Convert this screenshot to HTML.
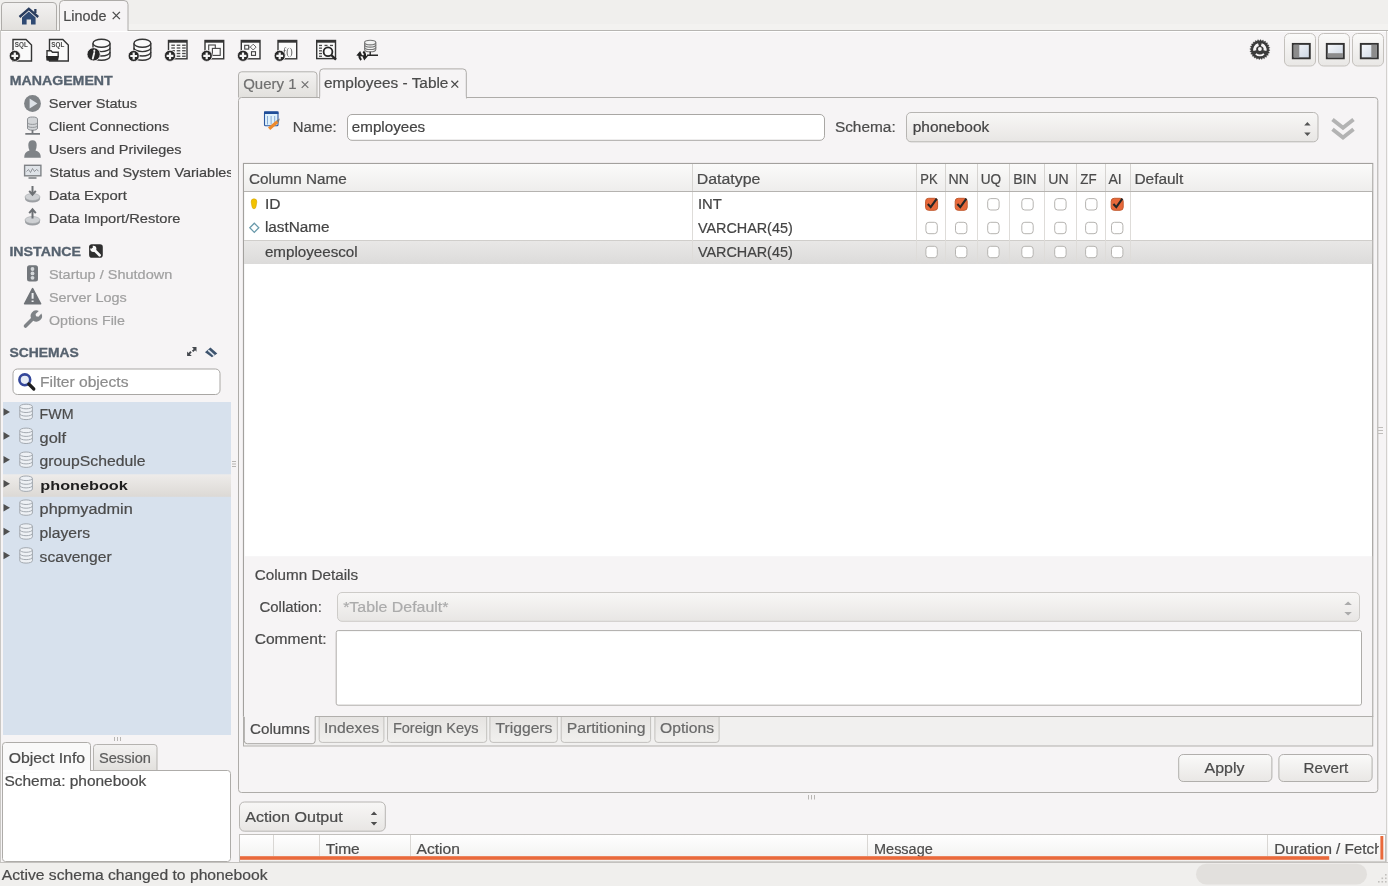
<!DOCTYPE html>
<html><head><meta charset="utf-8"><style>
html,body{margin:0;padding:0;background:#f6f4f5;overflow:hidden;}
svg{display:block;font-family:"Liberation Sans",sans-serif;-webkit-font-smoothing:antialiased;will-change:transform;}
</style></head><body>
<svg width="1388" height="886" viewBox="0 0 1388 886">
<defs>
<linearGradient id="gTab" x1="0" y1="0" x2="0" y2="1"><stop offset="0" stop-color="#f3f2f1"/><stop offset="1" stop-color="#e2e0dd"/></linearGradient>
<linearGradient id="gHdr" x1="0" y1="0" x2="0" y2="1"><stop offset="0" stop-color="#fbfbfa"/><stop offset="1" stop-color="#eeedec"/></linearGradient>
<linearGradient id="gBtn" x1="0" y1="0" x2="0" y2="1"><stop offset="0" stop-color="#fafaf9"/><stop offset="1" stop-color="#e9e7e5"/></linearGradient>
<linearGradient id="gCombo" x1="0" y1="0" x2="0" y2="1"><stop offset="0" stop-color="#f8f7f6"/><stop offset="1" stop-color="#e8e6e4"/></linearGradient>
<linearGradient id="gSel" x1="0" y1="0" x2="0" y2="1"><stop offset="0" stop-color="#eeecea"/><stop offset="1" stop-color="#dcd9d5"/></linearGradient>
<linearGradient id="gRow" x1="0" y1="0" x2="0" y2="1"><stop offset="0" stop-color="#e9e8e7"/><stop offset="1" stop-color="#dcdbda"/></linearGradient>
<linearGradient id="gTab2" x1="0" y1="0" x2="0" y2="1"><stop offset="0" stop-color="#e6e4e2"/><stop offset="1" stop-color="#f1f0ee"/></linearGradient>
<linearGradient id="gHdr2" x1="0" y1="0" x2="0" y2="1"><stop offset="0" stop-color="#ffffff"/><stop offset="1" stop-color="#f1f0ef"/></linearGradient>
</defs>
<rect x="0" y="0" width="1388" height="886" fill="#f6f4f5" />
<rect x="0" y="0" width="1388" height="30" fill="#f0efed" />
<rect x="0" y="862" width="1388" height="24" fill="#f0efed" />
<line x1="0" y1="30.5" x2="1388" y2="30.5" stroke="#b7b5b2" stroke-width="1"/>
<line x1="0" y1="31.5" x2="1388" y2="31.5" stroke="#ffffff" stroke-width="1"/>
<rect x="0" y="24" width="1388" height="6" fill="#f3f2f0" />
<line x1="1386.5" y1="31" x2="1386.5" y2="862" stroke="#d3d1ce" stroke-width="1"/>
<line x1="0" y1="862.5" x2="1388" y2="862.5" stroke="#c4c2bf" stroke-width="1"/>
<path d="M1.5,30 V6 Q1.5,2.5 5,2.5 H53 Q56.5,2.5 56.5,6 V30" fill="url(#gTab)" stroke="#aeaca9"/>
<path d="M59.5,31 V4.5 Q59.5,0.5 63.5,0.5 H124 Q128,0.5 128,4.5 V31" fill="#f6f4f5" stroke="#aeaca9"/>
<text x="63.30" y="20.5" font-size="14" fill="#4a4a4a" stroke="#4a4a4a" stroke-width="0.2" textLength="43.20" lengthAdjust="spacingAndGlyphs" >Linode</text>
<path d="M112.7,11.9 L119.89999999999999,19.1 M112.7,19.1 L119.89999999999999,11.9" stroke="#4a4a4a" stroke-width="1.3"/>
<path d="M19.5,17 L28.8,8.8 L38.2,17" fill="none" stroke="#2a3d5e" stroke-width="2.4" stroke-linejoin="miter"/>
<rect x="34.2" y="9" width="2.3" height="4" fill="#2a3d5e"/>
<path d="M22,17.5 L28.8,11.6 L35.6,17.5 V24.5 H31 V19.5 H26.6 V24.5 H22 Z" fill="#2f4a73"/>
<path d="M13,39.5 H26.0 L31.5,45.0 V61 H13 Z" fill="#fafafa" stroke="#353535" stroke-width="1.4"/>
<text x="14.8" y="47.2" font-size="8" font-weight="bold" fill="#444" textLength="13" lengthAdjust="spacingAndGlyphs">SQL</text>
<circle cx="14.8" cy="55.9" r="5.6" fill="#262626" stroke="#f6f4f5" stroke-width="0.8"/>
<path d="M11.4,55.9 H18.2 M14.8,52.5 V59.3" stroke="#f4f4f4" stroke-width="2.2"/>
<path d="M49.5,39.5 H62.8 L68.3,45.0 V61 H49.5 Z" fill="#fafafa" stroke="#353535" stroke-width="1.4"/>
<text x="51.3" y="47.2" font-size="8" font-weight="bold" fill="#444" textLength="13" lengthAdjust="spacingAndGlyphs">SQL</text>
<path d="M47,60.5 V50.7 H51 L52.5,52.3 H58.2 V56" fill="#fafafa" stroke="#353535" stroke-width="1.4"/>
<path d="M46,56 H59 L58,60.8 H47.5 Z" fill="#262626"/>
<path d="M93,43.3 V56.3 A8.5,4 0 0 0 110,56.3 V43.3" fill="#fafafa" stroke="#353535" stroke-width="1.4"/>
<ellipse cx="101.5" cy="43.3" rx="8.5" ry="4" fill="#fafafa" stroke="#353535" stroke-width="1.4"/>
<path d="M93,47.63333333333333 A8.5,4 0 0 0 110,47.63333333333333" fill="none" stroke="#353535" stroke-width="1.4"/>
<path d="M93,51.96666666666666 A8.5,4 0 0 0 110,51.96666666666666" fill="none" stroke="#353535" stroke-width="1.4"/>
<circle cx="93.6" cy="54.3" r="6.6" fill="#262626" stroke="#f6f4f5" stroke-width="0.8"/>
<path d="M94.3,50.6 v0.3" stroke="#eee" stroke-width="2" stroke-linecap="round"/>
<path d="M94.2,53 L92.8,58.5" stroke="#eee" stroke-width="1.9" stroke-linecap="round"/>
<path d="M134,43.3 V56.3 A8.400000000000006,4 0 0 0 150.8,56.3 V43.3" fill="#fafafa" stroke="#353535" stroke-width="1.4"/>
<ellipse cx="142.4" cy="43.3" rx="8.400000000000006" ry="4" fill="#fafafa" stroke="#353535" stroke-width="1.4"/>
<path d="M134,47.63333333333333 A8.400000000000006,4 0 0 0 150.8,47.63333333333333" fill="none" stroke="#353535" stroke-width="1.4"/>
<path d="M134,51.96666666666666 A8.400000000000006,4 0 0 0 150.8,51.96666666666666" fill="none" stroke="#353535" stroke-width="1.4"/>
<circle cx="133.7" cy="56" r="5.6" fill="#262626" stroke="#f6f4f5" stroke-width="0.8"/>
<path d="M130.29999999999998,56 H137.1 M133.7,52.6 V59.4" stroke="#f4f4f4" stroke-width="2.2"/>
<rect x="168.5" y="40.5" width="18.5" height="18.299999999999997" fill="#fafafa" stroke="#353535" stroke-width="1.4"/>
<rect x="168.5" y="40.5" width="18.5" height="2.2" fill="#353535"/>
<rect x="171.3" y="44.6" width="3.6" height="1.3" fill="#4a4a4a" />
<rect x="176.70000000000002" y="44.6" width="3.6" height="1.3" fill="#4a4a4a" />
<rect x="182.10000000000002" y="44.6" width="3.6" height="1.3" fill="#4a4a4a" />
<rect x="171.3" y="47.35" width="3.6" height="1.3" fill="#4a4a4a" />
<rect x="176.70000000000002" y="47.35" width="3.6" height="1.3" fill="#4a4a4a" />
<rect x="182.10000000000002" y="47.35" width="3.6" height="1.3" fill="#4a4a4a" />
<rect x="171.3" y="50.1" width="3.6" height="1.3" fill="#4a4a4a" />
<rect x="176.70000000000002" y="50.1" width="3.6" height="1.3" fill="#4a4a4a" />
<rect x="182.10000000000002" y="50.1" width="3.6" height="1.3" fill="#4a4a4a" />
<rect x="171.3" y="52.85" width="3.6" height="1.3" fill="#4a4a4a" />
<rect x="176.70000000000002" y="52.85" width="3.6" height="1.3" fill="#4a4a4a" />
<rect x="182.10000000000002" y="52.85" width="3.6" height="1.3" fill="#4a4a4a" />
<rect x="171.3" y="55.6" width="3.6" height="1.3" fill="#4a4a4a" />
<rect x="176.70000000000002" y="55.6" width="3.6" height="1.3" fill="#4a4a4a" />
<rect x="182.10000000000002" y="55.6" width="3.6" height="1.3" fill="#4a4a4a" />
<circle cx="170" cy="55.8" r="5.6" fill="#262626" stroke="#f6f4f5" stroke-width="0.8"/>
<path d="M166.6,55.8 H173.4 M170,52.4 V59.199999999999996" stroke="#f4f4f4" stroke-width="2.2"/>
<rect x="205" y="40.5" width="18.69999999999999" height="18.299999999999997" fill="#fafafa" stroke="#353535" stroke-width="1.4"/>
<rect x="205" y="40.5" width="18.69999999999999" height="2.2" fill="#353535"/>
<rect x="208.7" y="45" width="6.6" height="9" fill="none" stroke="#444" stroke-width="1.1" />
<rect x="212.4" y="48.4" width="7.8" height="7" fill="#fafafa" stroke="#444" stroke-width="1.1" />
<circle cx="206.7" cy="55.8" r="5.6" fill="#262626" stroke="#f6f4f5" stroke-width="0.8"/>
<path d="M203.29999999999998,55.8 H210.1 M206.7,52.4 V59.199999999999996" stroke="#f4f4f4" stroke-width="2.2"/>
<rect x="241.3" y="40.5" width="18.69999999999999" height="18.299999999999997" fill="#fafafa" stroke="#353535" stroke-width="1.4"/>
<rect x="241.3" y="40.5" width="18.69999999999999" height="2.2" fill="#353535"/>
<rect x="244.7" y="45.3" width="4" height="3.8" fill="#fafafa" stroke="#444" stroke-width="1.1" />
<path d="M253.2,44.2 l2.9,2.9 l-2.9,2.9 l-2.9,-2.9z" fill="#fafafa" stroke="#555" stroke-width="0.9"/>
<rect x="251.5" y="51.7" width="4" height="3.7" fill="#fafafa" stroke="#444" stroke-width="1.1" />
<path d="M248.9,47.1 H250.3" stroke="#555" stroke-width="0.8"/>
<circle cx="243" cy="55.8" r="5.6" fill="#262626" stroke="#f6f4f5" stroke-width="0.8"/>
<path d="M239.6,55.8 H246.4 M243,52.4 V59.199999999999996" stroke="#f4f4f4" stroke-width="2.2"/>
<rect x="278" y="40.5" width="18.69999999999999" height="18.299999999999997" fill="#fafafa" stroke="#353535" stroke-width="1.4"/>
<rect x="278" y="40.5" width="18.69999999999999" height="2.2" fill="#353535"/>
<text x="283" y="55" font-size="10" font-family="Liberation Serif" fill="#555" textLength="9.6" lengthAdjust="spacingAndGlyphs">f()</text>
<circle cx="279.7" cy="55.8" r="5.6" fill="#262626" stroke="#f6f4f5" stroke-width="0.8"/>
<path d="M276.3,55.8 H283.09999999999997 M279.7,52.4 V59.199999999999996" stroke="#f4f4f4" stroke-width="2.2"/>
<rect x="316.7" y="40.5" width="18.80000000000001" height="18.1" fill="#fafafa" stroke="#353535" stroke-width="1.4"/>
<rect x="316.7" y="40.5" width="18.80000000000001" height="2.2" fill="#353535"/>
<rect x="319" y="44.8" width="3" height="1.3" fill="#4a4a4a" />
<rect x="319" y="47.5" width="3" height="1.3" fill="#4a4a4a" />
<rect x="319" y="50.199999999999996" width="3" height="1.3" fill="#4a4a4a" />
<rect x="319" y="52.9" width="3" height="1.3" fill="#4a4a4a" />
<rect x="319" y="55.599999999999994" width="3" height="1.3" fill="#4a4a4a" />
<rect x="324.5" y="44.8" width="3" height="1.3" fill="#4a4a4a" />
<rect x="330" y="44.8" width="3" height="1.3" fill="#4a4a4a" />
<circle cx="328" cy="51.8" r="4.4" fill="#fafafa" stroke="#262626" stroke-width="1.8"/>
<path d="M331.2,55 L336,59.6" stroke="#262626" stroke-width="2.3"/>
<path d="M364.6,42.599999999999994 V49.400000000000006 A5.599999999999994,2.3 0 0 0 375.8,49.400000000000006 V42.599999999999994" fill="#f3f3f3" stroke="#777" stroke-width="1.1"/>
<ellipse cx="370.20000000000005" cy="42.599999999999994" rx="5.599999999999994" ry="2.3" fill="#f3f3f3" stroke="#777" stroke-width="1.1"/>
<path d="M364.6,44.86666666666666 A5.599999999999994,2.3 0 0 0 375.8,44.86666666666666" fill="none" stroke="#777" stroke-width="1.1"/>
<path d="M364.6,47.13333333333333 A5.599999999999994,2.3 0 0 0 375.8,47.13333333333333" fill="none" stroke="#777" stroke-width="1.1"/>
<path d="M370.2,51.7 V55.2 M367,55.2 H378" stroke="#262626" stroke-width="1.4"/>
<path d="M361.2,60 Q358.6,57.5 359.8,54.2" fill="none" stroke="#222" stroke-width="2"/>
<path d="M356.3,55.6 L360.2,51 L362.6,56.4 Z" fill="#222"/>
<path d="M363.3,51.5 Q366,54 364.7,57.3" fill="none" stroke="#222" stroke-width="2"/>
<path d="M368,55.9 L364.2,60.5 L361.8,55.1 Z" fill="#222"/>
<polygon points="1270.08,50.27 1268.43,51.30 1269.56,52.88 1267.70,53.45 1268.38,55.27 1266.44,55.34 1266.63,57.27 1264.73,56.83 1264.41,58.75 1262.70,57.84 1261.89,59.60 1260.47,58.28 1259.23,59.78 1258.20,58.13 1256.62,59.26 1256.05,57.40 1254.23,58.08 1254.16,56.14 1252.23,56.33 1252.67,54.43 1250.75,54.11 1251.66,52.40 1249.90,51.59 1251.22,50.17 1249.72,48.93 1251.37,47.90 1250.24,46.32 1252.10,45.75 1251.42,43.93 1253.36,43.86 1253.17,41.93 1255.07,42.37 1255.39,40.45 1257.10,41.36 1257.91,39.60 1259.33,40.92 1260.57,39.42 1261.60,41.07 1263.18,39.94 1263.75,41.80 1265.57,41.12 1265.64,43.06 1267.57,42.87 1267.13,44.77 1269.05,45.09 1268.14,46.80 1269.90,47.61 1268.58,49.03" fill="#3b3b3b" stroke="#3b3b3b" stroke-width="0.3" stroke-linejoin="round"/>
<path d="M1253.35,50.99 A6.7,6.7 0 0 1 1258.05,43.16 L1258.88,46.04 A3.7,3.7 0 0 0 1256.28,50.37 ZM1261.75,43.16 A6.7,6.7 0 0 1 1266.45,50.99 L1263.52,50.37 A3.7,3.7 0 0 0 1260.92,46.04 ZM1264.55,54.42 A6.7,6.7 0 0 1 1255.25,54.42 L1256.43,53.20 A5.0,5.0 0 0 0 1263.37,53.20 Z" fill="#f6f4f5"/>
<circle cx="1259.9" cy="49.0" r="1.9" fill="#f6f4f5"/>
<linearGradient id="gPane" x1="0" y1="0" x2="1" y2="1"><stop offset="0" stop-color="#f7f9fc"/><stop offset="1" stop-color="#ccd6e3"/></linearGradient>
<rect x="1284.5" y="33.5" width="31" height="32.5" fill="url(#gBtn)" stroke="#c4c1bd" stroke-width="1" rx="5" />
<rect x="1292.8" y="43.9" width="17" height="14.4" fill="url(#gPane)" stroke="#333333" stroke-width="1.9" />
<rect x="1293.7" y="44.8" width="5.6" height="12.6" fill="#8c8c8c" />
<rect x="1318.5" y="33.5" width="31" height="32.5" fill="url(#gBtn)" stroke="#c4c1bd" stroke-width="1" rx="5" />
<rect x="1326.8" y="43.9" width="17" height="14.4" fill="url(#gPane)" stroke="#333333" stroke-width="1.9" />
<rect x="1327.7" y="53.2" width="15.2" height="4.2" fill="#8c8c8c" />
<rect x="1352.5" y="33.5" width="31" height="32.5" fill="url(#gBtn)" stroke="#c4c1bd" stroke-width="1" rx="5" />
<rect x="1360.8" y="43.9" width="17" height="14.4" fill="url(#gPane)" stroke="#333333" stroke-width="1.9" />
<rect x="1371.3" y="44.8" width="5.6" height="12.6" fill="#8c8c8c" />
<line x1="0.5" y1="30" x2="0.5" y2="862" stroke="#c9c7c4" stroke-width="1"/>
<text x="9.70" y="85.2" font-size="12" font-weight="bold" fill="#56626f" textLength="103.00" lengthAdjust="spacingAndGlyphs" stroke="#56626f" stroke-width="0.3">MANAGEMENT</text>
<clipPath id="clipSV"><rect x="0" y="150" width="231" height="40"/></clipPath>
<text x="48.70" y="108.4" font-size="13.5" fill="#444444" stroke="#444444" stroke-width="0.2" textLength="88.40" lengthAdjust="spacingAndGlyphs" >Server Status</text>
<text x="48.70" y="131.4" font-size="13.5" fill="#444444" stroke="#444444" stroke-width="0.2" textLength="120.40" lengthAdjust="spacingAndGlyphs" >Client Connections</text>
<text x="48.70" y="154.4" font-size="13.5" fill="#444444" stroke="#444444" stroke-width="0.2" textLength="132.90" lengthAdjust="spacingAndGlyphs" >Users and Privileges</text>
<text x="49.40" y="177.4" font-size="13.5" fill="#444444" stroke="#444444" stroke-width="0.2" textLength="184.19" lengthAdjust="spacingAndGlyphs" clip-path="url(#clipSV)">Status and System Variables</text>
<text x="48.70" y="200.4" font-size="13.5" fill="#444444" stroke="#444444" stroke-width="0.2" textLength="78.10" lengthAdjust="spacingAndGlyphs" >Data Export</text>
<text x="48.70" y="223.4" font-size="13.5" fill="#444444" stroke="#444444" stroke-width="0.2" textLength="131.80" lengthAdjust="spacingAndGlyphs" >Data Import/Restore</text>
<circle cx="32.5" cy="103.5" r="8.4" fill="#7f8387"/>
<path d="M29.6,98.6 L37.4,103.5 L29.6,108.4 Z" fill="#dde2e8"/>
<ellipse cx="32.5" cy="119.2" rx="5" ry="2.2" fill="#d3d5d8" stroke="#8b8e92" stroke-width="1"/>
<path d="M27.5,119.2 V128 A5,2.2 0 0 0 37.5,128 V119.2" fill="#d3d5d8" stroke="#8b8e92" stroke-width="1"/>
<path d="M27.5,122.2 A5,2.2 0 0 0 37.5,122.2 M27.5,125.2 A5,2.2 0 0 0 37.5,125.2" fill="none" stroke="#8b8e92" stroke-width="0.9"/>
<path d="M32.5,130 V134 M25.3,133.8 H40" stroke="#75787c" stroke-width="1.8"/>
<path d="M24.2,157.8 Q24,152 29.5,150.6 Q28.3,148.3 28.3,145 Q28.3,140.2 32.5,140.2 Q36.7,140.2 36.7,145 Q36.7,148.3 35.5,150.6 Q41,152 40.8,157.8 Z" fill="#7f8387"/>
<rect x="24.6" y="165.3" width="16.3" height="10.5" fill="#dfe3e8" stroke="#7f8286" stroke-width="1.4"/>
<path d="M26.5,171.5 l2,-2 l2,3 l2,-4 l2,3 l2,-2 l2,1.5" fill="none" stroke="#7f8286" stroke-width="0.8"/>
<path d="M28.5,178 H36.5" stroke="#7f8286" stroke-width="1.6"/>
<path d="M25,197 V199 A7.5,3.5 0 0 0 40,199 V197" fill="#9c9fa3"/>
<ellipse cx="32.5" cy="197" rx="7.5" ry="3.5" fill="#cfd1d4" stroke="#a3a6a9" stroke-width="0.6"/>
<path d="M32.5,186 V194 M29.2,190.8 L32.5,194.6 L35.8,190.8" fill="none" stroke="#6d7074" stroke-width="2"/>
<path d="M25,220 V222 A7.5,3.5 0 0 0 40,222 V220" fill="#9c9fa3"/>
<ellipse cx="32.5" cy="220" rx="7.5" ry="3.5" fill="#cfd1d4" stroke="#a3a6a9" stroke-width="0.6"/>
<path d="M32.5,218.5 V210 M29.2,213.2 L32.5,209.4 L35.8,213.2" fill="none" stroke="#6d7074" stroke-width="2"/>
<text x="9.40" y="256" font-size="12" font-weight="bold" fill="#56626f" textLength="71.50" lengthAdjust="spacingAndGlyphs" stroke="#56626f" stroke-width="0.3">INSTANCE</text>
<rect x="89.1" y="244.2" width="13.7" height="13.6" fill="#2f2f2f" rx="2.8" />
<path d="M94.6,250.2 L99.6,255.2" stroke="#fafafa" stroke-width="2.7" stroke-linecap="round"/>
<circle cx="93.3" cy="248.8" r="3.1" fill="#fafafa"/>
<path d="M90.2,247.6 L92.6,247.6 L93.4,246.9 L93.4,244.8 L90.2,244.8 Z" fill="#2f2f2f" transform="rotate(-45 92.2 247.2)"/>
<text x="48.90" y="278.8" font-size="13.5" fill="#a0a0a0" stroke="#a0a0a0" stroke-width="0.2" textLength="123.40" lengthAdjust="spacingAndGlyphs" >Startup / Shutdown</text>
<text x="48.90" y="301.7" font-size="13.5" fill="#a0a0a0" stroke="#a0a0a0" stroke-width="0.2" textLength="77.80" lengthAdjust="spacingAndGlyphs" >Server Logs</text>
<text x="48.90" y="324.5" font-size="13.5" fill="#a0a0a0" stroke="#a0a0a0" stroke-width="0.2" textLength="76.00" lengthAdjust="spacingAndGlyphs" >Options File</text>
<rect x="27" y="265.3" width="11" height="16.2" fill="#73777c" rx="2.5" />
<circle cx="32.5" cy="269.0" r="1.9" fill="#d5d8db"/>
<circle cx="32.5" cy="273.4" r="1.9" fill="#d5d8db"/>
<circle cx="32.5" cy="277.8" r="1.9" fill="#d5d8db"/>
<path d="M32.6,288.6 L40.6,303.8 H24.6 Z" fill="#6f7378" stroke="#6f7378" stroke-linejoin="round" stroke-width="1.6"/>
<path d="M32.6,293 V298.8 M32.6,300.6 V302" stroke="#eef0f2" stroke-width="2"/>
<path d="M25.5,326 L33.5,318" stroke="#7f8387" stroke-width="3.6" stroke-linecap="round"/>
<path d="M32,319.5 a5.6,5.6 0 0 1 6.8,-8.6 l-3.2,3 l0.4,2.4 l2.4,0.4 l3,-3.2 a5.6,5.6 0 0 1 -8.4,7 z" fill="#7f8387"/>
<text x="9.40" y="357" font-size="12" font-weight="bold" fill="#56626f" textLength="69.50" lengthAdjust="spacingAndGlyphs" stroke="#56626f" stroke-width="0.3">SCHEMAS</text>
<path d="M192,347 H196.5 V351.7 L195.1,350.3 L193.3,352.1 L191.9,350.7 L193.7,348.9 Z" fill="#45494f"/>
<path d="M191.8,356 H187.1 V351.5 L188.5,352.9 L190.3,351.1 L191.7,352.5 L189.9,354.3 Z" fill="#45494f"/>
<path d="M205,352.2 L210.4,347.6 L217.3,353.6 L211.9,357.3 Z" fill="#3d536d"/>
<path d="M208.2,350.2 L214.3,355.6" stroke="#dfe6ef" stroke-width="1.7"/>
<rect x="13" y="369" width="207" height="25.5" fill="#ffffff" stroke="#a9a7a4" stroke-width="1" rx="4.5" />
<circle cx="24.8" cy="379.8" r="5.4" fill="#e6ecf6" stroke="#34479a" stroke-width="2.6"/>
<path d="M28.8,384 L33.8,389" stroke="#1e1e1e" stroke-width="3.2" stroke-linecap="round"/>
<text x="39.90" y="386.6" font-size="14" fill="#8c8c8c" stroke="#8c8c8c" stroke-width="0.2" textLength="88.60" lengthAdjust="spacingAndGlyphs" >Filter objects</text>
<rect x="3" y="402" width="228" height="333" fill="#d7e1ed" />
<rect x="3" y="474.3" width="228" height="22.5" fill="url(#gSel)" />
<path d="M3.5,408.2 L10,412.0 L3.5,415.8 Z" fill="#505050"/>
<path d="M19.8,406.5 V417.3 A6.3,2.3 0 0 0 32.4,417.3 V406.5" fill="#eef1f5" stroke="#a3a9b0" stroke-width="1"/>
<ellipse cx="26.1" cy="406.5" rx="6.3" ry="2.3" fill="#eef1f5" stroke="#a3a9b0" stroke-width="1"/>
<path d="M19.8,410.2 A6.3,2.3 0 0 0 32.4,410.2 M19.8,413.8 A6.3,2.3 0 0 0 32.4,413.8" fill="none" stroke="#a3a9b0" stroke-width="1"/>
<text x="39.60" y="418.6" font-size="14" fill="#4b4b4b" stroke="#4b4b4b" stroke-width="0.2" textLength="34.00" lengthAdjust="spacingAndGlyphs" >FWM</text>
<path d="M3.5,432.1 L10,435.9 L3.5,439.7 Z" fill="#505050"/>
<path d="M19.8,430.4 V441.2 A6.3,2.3 0 0 0 32.4,441.2 V430.4" fill="#eef1f5" stroke="#a3a9b0" stroke-width="1"/>
<ellipse cx="26.1" cy="430.4" rx="6.3" ry="2.3" fill="#eef1f5" stroke="#a3a9b0" stroke-width="1"/>
<path d="M19.8,434.1 A6.3,2.3 0 0 0 32.4,434.1 M19.8,437.7 A6.3,2.3 0 0 0 32.4,437.7" fill="none" stroke="#a3a9b0" stroke-width="1"/>
<text x="39.60" y="442.52000000000004" font-size="14" fill="#4b4b4b" stroke="#4b4b4b" stroke-width="0.2" textLength="26.40" lengthAdjust="spacingAndGlyphs" >golf</text>
<path d="M3.5,456.0 L10,459.8 L3.5,463.6 Z" fill="#505050"/>
<path d="M19.8,454.3 V465.1 A6.3,2.3 0 0 0 32.4,465.1 V454.3" fill="#eef1f5" stroke="#a3a9b0" stroke-width="1"/>
<ellipse cx="26.1" cy="454.3" rx="6.3" ry="2.3" fill="#eef1f5" stroke="#a3a9b0" stroke-width="1"/>
<path d="M19.8,458.0 A6.3,2.3 0 0 0 32.4,458.0 M19.8,461.6 A6.3,2.3 0 0 0 32.4,461.6" fill="none" stroke="#a3a9b0" stroke-width="1"/>
<text x="39.60" y="466.44000000000005" font-size="14" fill="#4b4b4b" stroke="#4b4b4b" stroke-width="0.2" textLength="105.90" lengthAdjust="spacingAndGlyphs" >groupSchedule</text>
<path d="M3.5,480.0 L10,483.8 L3.5,487.6 Z" fill="#505050"/>
<path d="M19.8,478.3 V489.1 A6.3,2.3 0 0 0 32.4,489.1 V478.3" fill="#eef1f5" stroke="#a3a9b0" stroke-width="1"/>
<ellipse cx="26.1" cy="478.3" rx="6.3" ry="2.3" fill="#eef1f5" stroke="#a3a9b0" stroke-width="1"/>
<path d="M19.8,482.0 A6.3,2.3 0 0 0 32.4,482.0 M19.8,485.6 A6.3,2.3 0 0 0 32.4,485.6" fill="none" stroke="#a3a9b0" stroke-width="1"/>
<text x="40.30" y="490.36" font-size="13.5" font-weight="bold" fill="#1e1e1e" textLength="87.50" lengthAdjust="spacingAndGlyphs" >phonebook</text>
<path d="M3.5,503.9 L10,507.7 L3.5,511.5 Z" fill="#505050"/>
<path d="M19.8,502.2 V513.0 A6.3,2.3 0 0 0 32.4,513.0 V502.2" fill="#eef1f5" stroke="#a3a9b0" stroke-width="1"/>
<ellipse cx="26.1" cy="502.2" rx="6.3" ry="2.3" fill="#eef1f5" stroke="#a3a9b0" stroke-width="1"/>
<path d="M19.8,505.9 A6.3,2.3 0 0 0 32.4,505.9 M19.8,509.5 A6.3,2.3 0 0 0 32.4,509.5" fill="none" stroke="#a3a9b0" stroke-width="1"/>
<text x="39.60" y="514.28" font-size="14" fill="#4b4b4b" stroke="#4b4b4b" stroke-width="0.2" textLength="93.10" lengthAdjust="spacingAndGlyphs" >phpmyadmin</text>
<path d="M3.5,527.8 L10,531.6 L3.5,535.4 Z" fill="#505050"/>
<path d="M19.8,526.1 V536.9 A6.3,2.3 0 0 0 32.4,536.9 V526.1" fill="#eef1f5" stroke="#a3a9b0" stroke-width="1"/>
<ellipse cx="26.1" cy="526.1" rx="6.3" ry="2.3" fill="#eef1f5" stroke="#a3a9b0" stroke-width="1"/>
<path d="M19.8,529.8 A6.3,2.3 0 0 0 32.4,529.8 M19.8,533.4 A6.3,2.3 0 0 0 32.4,533.4" fill="none" stroke="#a3a9b0" stroke-width="1"/>
<text x="39.60" y="538.2" font-size="14" fill="#4b4b4b" stroke="#4b4b4b" stroke-width="0.2" textLength="50.40" lengthAdjust="spacingAndGlyphs" >players</text>
<path d="M3.5,551.7 L10,555.5 L3.5,559.3 Z" fill="#505050"/>
<path d="M19.8,550.0 V560.8 A6.3,2.3 0 0 0 32.4,560.8 V550.0" fill="#eef1f5" stroke="#a3a9b0" stroke-width="1"/>
<ellipse cx="26.1" cy="550.0" rx="6.3" ry="2.3" fill="#eef1f5" stroke="#a3a9b0" stroke-width="1"/>
<path d="M19.8,553.7 A6.3,2.3 0 0 0 32.4,553.7 M19.8,557.3 A6.3,2.3 0 0 0 32.4,557.3" fill="none" stroke="#a3a9b0" stroke-width="1"/>
<text x="39.60" y="562.12" font-size="14" fill="#4b4b4b" stroke="#4b4b4b" stroke-width="0.2" textLength="72.00" lengthAdjust="spacingAndGlyphs" >scavenger</text>
<line x1="114.5" y1="737" x2="114.5" y2="741" stroke="#b8b6b3" stroke-width="1"/>
<line x1="117.5" y1="737" x2="117.5" y2="741" stroke="#b8b6b3" stroke-width="1"/>
<line x1="120.5" y1="737" x2="120.5" y2="741" stroke="#b8b6b3" stroke-width="1"/>
<line x1="232" y1="461.5" x2="236" y2="461.5" stroke="#b8b6b3" stroke-width="1"/>
<line x1="232" y1="464.0" x2="236" y2="464.0" stroke="#b8b6b3" stroke-width="1"/>
<line x1="232" y1="466.5" x2="236" y2="466.5" stroke="#b8b6b3" stroke-width="1"/>
<path d="M93.5,771 V747.5 Q93.5,744.5 96.5,744.5 H154 Q157,744.5 157,747.5 V771" fill="url(#gTab)" stroke="#b5b3b0"/>
<rect x="2.5" y="770.5" width="228" height="91" fill="#ffffff" stroke="#aeaca9" stroke-width="1" rx="3" />
<path d="M2.5,774 V745.5 Q2.5,742.5 5.5,742.5 H87.5 Q90.5,742.5 90.5,745.5 V771" fill="#f9f9f9" stroke="#aeaca9"/>
<rect x="3" y="770" width="87" height="2.5" fill="#ffffff" />
<text x="8.70" y="762.6" font-size="14" fill="#4b4b4b" stroke="#4b4b4b" stroke-width="0.2" textLength="76.40" lengthAdjust="spacingAndGlyphs" >Object Info</text>
<text x="99.00" y="763.4" font-size="14" fill="#5c5c5c" stroke="#5c5c5c" stroke-width="0.2" textLength="51.90" lengthAdjust="spacingAndGlyphs" >Session</text>
<text x="4.50" y="786" font-size="14" fill="#4b4b4b" stroke="#4b4b4b" stroke-width="0.2" textLength="141.70" lengthAdjust="spacingAndGlyphs" >Schema: phonebook</text>
<path d="M238.5,97.5 V75 Q238.5,71.8 241.7,71.8 H313.8 Q317,71.8 317,75 V97.5" fill="url(#gTab)" stroke="#b3b1ae"/>
<text x="243.20" y="89.3" font-size="14" fill="#707070" stroke="#707070" stroke-width="0.2" textLength="53.30" lengthAdjust="spacingAndGlyphs" >Query 1</text>
<path d="M301.7,81.3 L308.3,87.89999999999999 M301.7,87.89999999999999 L308.3,81.3" stroke="#707070" stroke-width="1.2"/>
<rect x="238.5" y="97.5" width="1139.3" height="695" fill="#f6f4f5" stroke="#aeaca9" stroke-width="1" rx="3" />
<path d="M319.7,98.5 V72.3 Q319.7,68.9 323.2,68.9 H462.8 Q466.3,68.9 466.3,72.3 V98.5" fill="#f6f4f5" stroke="#aeaca9"/>
<rect x="320.2" y="96.5" width="145.6" height="2.5" fill="#f6f4f5" />
<text x="324.00" y="88.4" font-size="14" fill="#4b4b4b" stroke="#4b4b4b" stroke-width="0.2" textLength="124.40" lengthAdjust="spacingAndGlyphs" >employees - Table</text>
<path d="M451.40000000000003,80.8 L458.2,87.60000000000001 M451.40000000000003,87.60000000000001 L458.2,80.8" stroke="#4b4b4b" stroke-width="1.25"/>
<rect x="264.5" y="112" width="13.5" height="13.8" fill="#dff1fb" stroke="#2b58a0" stroke-width="1.1" rx="1" />
<rect x="264" y="111.4" width="14.5" height="2.6" fill="#1f4d98" />
<line x1="267.5" y1="116" x2="267.5" y2="124.5" stroke="#86a9d6" stroke-width="1"/>
<line x1="271.1" y1="116" x2="271.1" y2="124.5" stroke="#86a9d6" stroke-width="1"/>
<line x1="274.7" y1="116" x2="274.7" y2="124.5" stroke="#86a9d6" stroke-width="1"/>
<path d="M268,127.6 L276.4,120.4 L278.6,122.8 L270.2,130 Z" fill="#ee8a2c"/>
<path d="M276.4,120.4 L279.8,118.6 L278.6,122.8 Z" fill="#7a7a7a"/>
<text x="292.80" y="132.4" font-size="14" fill="#4b4b4b" stroke="#4b4b4b" stroke-width="0.2" textLength="43.90" lengthAdjust="spacingAndGlyphs" >Name:</text>
<rect x="347.5" y="114.5" width="477" height="25.8" fill="#ffffff" stroke="#a9a7a4" stroke-width="1" rx="4.5" />
<text x="351.80" y="132.4" font-size="14" fill="#444444" stroke="#444444" stroke-width="0.2" textLength="73.40" lengthAdjust="spacingAndGlyphs" >employees</text>
<text x="834.90" y="132.2" font-size="14" fill="#4b4b4b" stroke="#4b4b4b" stroke-width="0.2" textLength="60.80" lengthAdjust="spacingAndGlyphs" >Schema:</text>
<rect x="906.5" y="112.5" width="411.5" height="29.3" fill="url(#gCombo)" stroke="#b7b5b2" stroke-width="1" rx="4.5" />
<text x="912.70" y="132.2" font-size="14" fill="#444444" stroke="#444444" stroke-width="0.2" textLength="76.60" lengthAdjust="spacingAndGlyphs" >phonebook</text>
<path d="M1304.2,125.4 L1307.4,121.9 L1310.6,125.4 Z M1304.2,132.4 L1307.4,135.9 L1310.6,132.4 Z" fill="#555555"/>
<path d="M1332.5,119.5 L1343,127.8 L1353.5,119.5 M1332.5,129.3 L1343,137.6 L1353.5,129.3" fill="none" stroke="#b3b3b3" stroke-width="3.9"/>
<rect x="243.5" y="163.5" width="1129.2" height="553" fill="#ffffff" stroke="#a3a19e" stroke-width="1.2" />
<rect x="244" y="164" width="1128.2" height="27" fill="url(#gHdr)" />
<line x1="244" y1="191.5" x2="1372.2" y2="191.5" stroke="#b5b3b0" stroke-width="1"/>
<line x1="692.5" y1="164" x2="692.5" y2="191" stroke="#d6d4d1" stroke-width="1"/>
<line x1="916.5" y1="164" x2="916.5" y2="191" stroke="#d6d4d1" stroke-width="1"/>
<line x1="945.5" y1="164" x2="945.5" y2="191" stroke="#d6d4d1" stroke-width="1"/>
<line x1="977.5" y1="164" x2="977.5" y2="191" stroke="#d6d4d1" stroke-width="1"/>
<line x1="1009.5" y1="164" x2="1009.5" y2="191" stroke="#d6d4d1" stroke-width="1"/>
<line x1="1044.5" y1="164" x2="1044.5" y2="191" stroke="#d6d4d1" stroke-width="1"/>
<line x1="1076.5" y1="164" x2="1076.5" y2="191" stroke="#d6d4d1" stroke-width="1"/>
<line x1="1105.5" y1="164" x2="1105.5" y2="191" stroke="#d6d4d1" stroke-width="1"/>
<line x1="1130.5" y1="164" x2="1130.5" y2="191" stroke="#d6d4d1" stroke-width="1"/>
<rect x="244" y="240.5" width="1128.2" height="23.5" fill="url(#gRow)" />
<line x1="244" y1="240.5" x2="1372.2" y2="240.5" stroke="#d0cecb" stroke-width="1"/>
<line x1="692.5" y1="192" x2="692.5" y2="264" stroke="#dedcd9" stroke-width="1"/>
<line x1="916.5" y1="192" x2="916.5" y2="264" stroke="#dedcd9" stroke-width="1"/>
<line x1="945.5" y1="192" x2="945.5" y2="264" stroke="#dedcd9" stroke-width="1"/>
<line x1="977.5" y1="192" x2="977.5" y2="264" stroke="#dedcd9" stroke-width="1"/>
<line x1="1009.5" y1="192" x2="1009.5" y2="264" stroke="#dedcd9" stroke-width="1"/>
<line x1="1044.5" y1="192" x2="1044.5" y2="264" stroke="#dedcd9" stroke-width="1"/>
<line x1="1076.5" y1="192" x2="1076.5" y2="264" stroke="#dedcd9" stroke-width="1"/>
<line x1="1105.5" y1="192" x2="1105.5" y2="264" stroke="#dedcd9" stroke-width="1"/>
<line x1="1130.5" y1="192" x2="1130.5" y2="264" stroke="#dedcd9" stroke-width="1"/>
<text x="249.10" y="183.5" font-size="14" fill="#4b4b4b" stroke="#4b4b4b" stroke-width="0.2" textLength="97.60" lengthAdjust="spacingAndGlyphs" >Column Name</text>
<text x="696.80" y="183.5" font-size="14" fill="#4b4b4b" stroke="#4b4b4b" stroke-width="0.2" textLength="63.60" lengthAdjust="spacingAndGlyphs" >Datatype</text>
<text x="920.30" y="183.5" font-size="14" fill="#4b4b4b" stroke="#4b4b4b" stroke-width="0.2" textLength="17.34" lengthAdjust="spacingAndGlyphs" >PK</text>
<text x="948.60" y="183.5" font-size="14" fill="#4b4b4b" stroke="#4b4b4b" stroke-width="0.2" textLength="20.40" lengthAdjust="spacingAndGlyphs" >NN</text>
<text x="980.80" y="183.5" font-size="14" fill="#4b4b4b" stroke="#4b4b4b" stroke-width="0.2" textLength="20.40" lengthAdjust="spacingAndGlyphs" >UQ</text>
<text x="1013.20" y="183.5" font-size="14" fill="#4b4b4b" stroke="#4b4b4b" stroke-width="0.2" textLength="23.46" lengthAdjust="spacingAndGlyphs" >BIN</text>
<text x="1048.30" y="183.5" font-size="14" fill="#4b4b4b" stroke="#4b4b4b" stroke-width="0.2" textLength="20.40" lengthAdjust="spacingAndGlyphs" >UN</text>
<text x="1080.30" y="183.5" font-size="14" fill="#4b4b4b" stroke="#4b4b4b" stroke-width="0.2" textLength="16.32" lengthAdjust="spacingAndGlyphs" >ZF</text>
<text x="1108.50" y="183.5" font-size="14" fill="#4b4b4b" stroke="#4b4b4b" stroke-width="0.2" textLength="13.26" lengthAdjust="spacingAndGlyphs" >AI</text>
<text x="1134.40" y="183.5" font-size="14" fill="#4b4b4b" stroke="#4b4b4b" stroke-width="0.2" textLength="48.96" lengthAdjust="spacingAndGlyphs" >Default</text>
<path d="M251.2,202 Q251,198.8 254,198.8 Q257,198.8 256.8,202 L256,206.5 Q255.6,208.8 254,208.8 Q252.4,208.8 252,206.5 Z" fill="#f2c200" stroke="#d4a300" stroke-width="0.6"/>
<path d="M254.3,223.2 L258.8,227.8 L254.3,232.4 L249.8,227.8 Z" fill="#ffffff" stroke="#6a9aab" stroke-width="1.3"/>
<text x="264.90" y="208.6" font-size="14" fill="#444444" stroke="#444444" stroke-width="0.2" textLength="15.60" lengthAdjust="spacingAndGlyphs" >ID</text>
<text x="697.90" y="208.6" font-size="14" fill="#444444" stroke="#444444" stroke-width="0.2" textLength="23.90" lengthAdjust="spacingAndGlyphs" >INT</text>
<text x="264.90" y="232.4" font-size="14" fill="#444444" stroke="#444444" stroke-width="0.2" textLength="64.60" lengthAdjust="spacingAndGlyphs" >lastName</text>
<text x="697.90" y="232.5" font-size="14" fill="#444444" stroke="#444444" stroke-width="0.2" textLength="94.80" lengthAdjust="spacingAndGlyphs" >VARCHAR(45)</text>
<text x="264.90" y="256.6" font-size="14" fill="#444444" stroke="#444444" stroke-width="0.2" textLength="92.80" lengthAdjust="spacingAndGlyphs" >employeescol</text>
<text x="697.90" y="256.5" font-size="14" fill="#444444" stroke="#444444" stroke-width="0.2" textLength="94.80" lengthAdjust="spacingAndGlyphs" >VARCHAR(45)</text>
<rect x="925.6" y="198.3" width="12" height="12" fill="#e8693a" stroke="#c25a30" stroke-width="1" rx="3" />
<path d="M927.8,204.0 L930.7,207.2 L936.8,198.7" fill="none" stroke="#262626" stroke-width="2.1"/>
<rect x="955.2" y="198.3" width="12" height="12" fill="#e8693a" stroke="#c25a30" stroke-width="1" rx="3" />
<path d="M957.4,204.0 L960.3,207.2 L966.4,198.7" fill="none" stroke="#262626" stroke-width="2.1"/>
<rect x="987.6999999999999" y="198.60000000000002" width="11.4" height="11.4" fill="#ffffff" stroke="#b6b4b1" stroke-width="1" rx="3" />
<rect x="1021.8" y="198.60000000000002" width="11.4" height="11.4" fill="#ffffff" stroke="#b6b4b1" stroke-width="1" rx="3" />
<rect x="1054.7" y="198.60000000000002" width="11.4" height="11.4" fill="#ffffff" stroke="#b6b4b1" stroke-width="1" rx="3" />
<rect x="1085.6" y="198.60000000000002" width="11.4" height="11.4" fill="#ffffff" stroke="#b6b4b1" stroke-width="1" rx="3" />
<rect x="1111.2" y="198.3" width="12" height="12" fill="#e8693a" stroke="#c25a30" stroke-width="1" rx="3" />
<path d="M1113.4,204.0 L1116.3,207.2 L1122.4,198.7" fill="none" stroke="#262626" stroke-width="2.1"/>
<rect x="925.9" y="222.3" width="11.4" height="11.4" fill="#ffffff" stroke="#b6b4b1" stroke-width="1" rx="3" />
<rect x="955.5" y="222.3" width="11.4" height="11.4" fill="#ffffff" stroke="#b6b4b1" stroke-width="1" rx="3" />
<rect x="987.6999999999999" y="222.3" width="11.4" height="11.4" fill="#ffffff" stroke="#b6b4b1" stroke-width="1" rx="3" />
<rect x="1021.8" y="222.3" width="11.4" height="11.4" fill="#ffffff" stroke="#b6b4b1" stroke-width="1" rx="3" />
<rect x="1054.7" y="222.3" width="11.4" height="11.4" fill="#ffffff" stroke="#b6b4b1" stroke-width="1" rx="3" />
<rect x="1085.6" y="222.3" width="11.4" height="11.4" fill="#ffffff" stroke="#b6b4b1" stroke-width="1" rx="3" />
<rect x="1111.5" y="222.3" width="11.4" height="11.4" fill="#ffffff" stroke="#b6b4b1" stroke-width="1" rx="3" />
<rect x="925.9" y="246.3" width="11.4" height="11.4" fill="#ffffff" stroke="#b6b4b1" stroke-width="1" rx="3" />
<rect x="955.5" y="246.3" width="11.4" height="11.4" fill="#ffffff" stroke="#b6b4b1" stroke-width="1" rx="3" />
<rect x="987.6999999999999" y="246.3" width="11.4" height="11.4" fill="#ffffff" stroke="#b6b4b1" stroke-width="1" rx="3" />
<rect x="1021.8" y="246.3" width="11.4" height="11.4" fill="#ffffff" stroke="#b6b4b1" stroke-width="1" rx="3" />
<rect x="1054.7" y="246.3" width="11.4" height="11.4" fill="#ffffff" stroke="#b6b4b1" stroke-width="1" rx="3" />
<rect x="1085.6" y="246.3" width="11.4" height="11.4" fill="#ffffff" stroke="#b6b4b1" stroke-width="1" rx="3" />
<rect x="1111.5" y="246.3" width="11.4" height="11.4" fill="#ffffff" stroke="#b6b4b1" stroke-width="1" rx="3" />
<rect x="244" y="556.2" width="1128.2" height="160" fill="#f6f4f5" />
<text x="254.70" y="579.9" font-size="14" fill="#4a4a4a" stroke="#4a4a4a" stroke-width="0.2" textLength="103.40" lengthAdjust="spacingAndGlyphs" >Column Details</text>
<text x="259.50" y="611.9" font-size="14" fill="#4a4a4a" stroke="#4a4a4a" stroke-width="0.2" textLength="62.30" lengthAdjust="spacingAndGlyphs" >Collation:</text>
<rect x="337.5" y="592.5" width="1022" height="28.8" fill="url(#gCombo)" stroke="#cdcbc8" stroke-width="1" rx="4.5" />
<text x="343.20" y="611.9" font-size="14" fill="#ababab" stroke="#ababab" stroke-width="0.2" textLength="105.20" lengthAdjust="spacingAndGlyphs" >*Table Default*</text>
<path d="M1344.3,605.1 L1348.1,601.6 L1351.9,605.1 Z M1344.3,612.1 L1348.1,615.6 L1351.9,612.1 Z" fill="#ababab"/>
<text x="254.70" y="643.9" font-size="14" fill="#4a4a4a" stroke="#4a4a4a" stroke-width="0.2" textLength="71.90" lengthAdjust="spacingAndGlyphs" >Comment:</text>
<rect x="336.2" y="630.6" width="1025.3" height="74.6" fill="#ffffff" stroke="#aeaca9" stroke-width="1" rx="2" />
<rect x="243.5" y="716.5" width="1129.2" height="29.5" fill="#f1f0ef" stroke="#b1afac" stroke-width="1" />
<path d="M244.3,716 V740.7 Q244.3,743.7 247.3,743.7 H312.2 Q315.2,743.7 315.2,740.7 V716" fill="#f6f4f5" stroke="#a9a7a4"/>
<rect x="244.8" y="714.5" width="70" height="2.5" fill="#f6f4f5" />
<rect x="243.8" y="716" width="1" height="1" fill="#f6f4f5" />
<text x="250.00" y="734.2" font-size="14" fill="#4b4b4b" stroke="#4b4b4b" stroke-width="0.2" textLength="59.90" lengthAdjust="spacingAndGlyphs" >Columns</text>
<path d="M319.2,717 V739.4 Q319.2,742.4 322.2,742.4 H380.9 Q383.9,742.4 383.9,739.4 V717" fill="url(#gTab2)" stroke="#c2c0bd"/>
<text x="324.00" y="733.3" font-size="14" fill="#6a6a6a" stroke="#6a6a6a" stroke-width="0.2" textLength="55.00" lengthAdjust="spacingAndGlyphs" >Indexes</text>
<path d="M387.5,717 V739.4 Q387.5,742.4 390.5,742.4 H483.7 Q486.7,742.4 486.7,739.4 V717" fill="url(#gTab2)" stroke="#c2c0bd"/>
<text x="392.90" y="733.3" font-size="14" fill="#6a6a6a" stroke="#6a6a6a" stroke-width="0.2" textLength="85.68" lengthAdjust="spacingAndGlyphs" >Foreign Keys</text>
<path d="M489.9,717 V739.4 Q489.9,742.4 492.9,742.4 H554.3 Q557.3,742.4 557.3,739.4 V717" fill="url(#gTab2)" stroke="#c2c0bd"/>
<text x="495.50" y="733.3" font-size="14" fill="#6a6a6a" stroke="#6a6a6a" stroke-width="0.2" textLength="56.90" lengthAdjust="spacingAndGlyphs" >Triggers</text>
<path d="M561.2,717 V739.4 Q561.2,742.4 564.2,742.4 H647.6 Q650.6,742.4 650.6,739.4 V717" fill="url(#gTab2)" stroke="#c2c0bd"/>
<text x="566.70" y="733.3" font-size="14" fill="#6a6a6a" stroke="#6a6a6a" stroke-width="0.2" textLength="78.80" lengthAdjust="spacingAndGlyphs" >Partitioning</text>
<path d="M654.9,717 V739.4 Q654.9,742.4 657.9,742.4 H716.1 Q719.1,742.4 719.1,739.4 V717" fill="url(#gTab2)" stroke="#c2c0bd"/>
<text x="660.00" y="733.3" font-size="14" fill="#6a6a6a" stroke="#6a6a6a" stroke-width="0.2" textLength="54.00" lengthAdjust="spacingAndGlyphs" >Options</text>
<rect x="1178.7" y="754.5" width="93.20000000000005" height="27" fill="url(#gBtn)" stroke="#b1afac" stroke-width="1" rx="4.5" />
<text x="1204.60" y="773.3" font-size="14" fill="#4b4b4b" stroke="#4b4b4b" stroke-width="0.2" textLength="39.90" lengthAdjust="spacingAndGlyphs" >Apply</text>
<rect x="1278.9" y="754.5" width="93.19999999999982" height="27" fill="url(#gBtn)" stroke="#b1afac" stroke-width="1" rx="4.5" />
<text x="1303.60" y="773.3" font-size="14" fill="#4b4b4b" stroke="#4b4b4b" stroke-width="0.2" textLength="44.60" lengthAdjust="spacingAndGlyphs" >Revert</text>
<line x1="1378" y1="427.5" x2="1383" y2="427.5" stroke="#c0bebb" stroke-width="1"/>
<line x1="1378" y1="430.5" x2="1383" y2="430.5" stroke="#c0bebb" stroke-width="1"/>
<line x1="1378" y1="433.5" x2="1383" y2="433.5" stroke="#c0bebb" stroke-width="1"/>
<line x1="808.5" y1="795" x2="808.5" y2="799.5" stroke="#b8b6b3" stroke-width="1"/>
<line x1="811.5" y1="795" x2="811.5" y2="799.5" stroke="#b8b6b3" stroke-width="1"/>
<line x1="814.5" y1="795" x2="814.5" y2="799.5" stroke="#b8b6b3" stroke-width="1"/>
<rect x="239.5" y="802" width="145.8" height="29.2" fill="url(#gCombo)" stroke="#b7b5b2" stroke-width="1" rx="5" />
<text x="245.30" y="821.6" font-size="14" fill="#4b4b4b" stroke="#4b4b4b" stroke-width="0.2" textLength="97.40" lengthAdjust="spacingAndGlyphs" >Action Output</text>
<path d="M370.8,815.0 L374.0,811.5 L377.2,815.0 Z M370.8,822.0 L374.0,825.5 L377.2,822.0 Z" fill="#4e4e4e"/>
<rect x="239.5" y="834.5" width="1146" height="27.3" fill="url(#gHdr2)" stroke="#c2c0bd" stroke-width="1" />
<line x1="273.5" y1="835" x2="273.5" y2="856" stroke="#d9d7d4" stroke-width="1"/>
<line x1="319.5" y1="835" x2="319.5" y2="856" stroke="#d9d7d4" stroke-width="1"/>
<line x1="410.5" y1="835" x2="410.5" y2="856" stroke="#d9d7d4" stroke-width="1"/>
<line x1="867.5" y1="835" x2="867.5" y2="856" stroke="#d9d7d4" stroke-width="1"/>
<line x1="1267.5" y1="835" x2="1267.5" y2="856" stroke="#d9d7d4" stroke-width="1"/>
<text x="325.80" y="853.7" font-size="14" fill="#4b4b4b" stroke="#4b4b4b" stroke-width="0.2" textLength="33.90" lengthAdjust="spacingAndGlyphs" >Time</text>
<text x="416.50" y="853.7" font-size="14" fill="#4b4b4b" stroke="#4b4b4b" stroke-width="0.2" textLength="43.40" lengthAdjust="spacingAndGlyphs" >Action</text>
<text x="874.10" y="853.7" font-size="14" fill="#4b4b4b" stroke="#4b4b4b" stroke-width="0.2" textLength="58.60" lengthAdjust="spacingAndGlyphs" >Message</text>
<clipPath id="clipDur"><rect x="1268" y="835" width="111" height="26"/></clipPath>
<text x="1274.30" y="853.7" font-size="14" fill="#4b4b4b" stroke="#4b4b4b" stroke-width="0.2" textLength="145.60" lengthAdjust="spacingAndGlyphs" clip-path="url(#clipDur)">Duration / Fetch Time</text>
<rect x="240" y="856.2" width="1089.2" height="3.6" fill="#e9693b" />
<rect x="1380.4" y="836" width="2.9" height="23.5" fill="#e9693b" />
<text x="1.80" y="879.6" font-size="14" fill="#4a4a4a" stroke="#4a4a4a" stroke-width="0.2" textLength="265.70" lengthAdjust="spacingAndGlyphs" >Active schema changed to phonebook</text>
<rect x="1196" y="863.8" width="171" height="20.8" fill="#e2e0dd" rx="10.4" />
<rect x="1378" y="881" width="1.6" height="1.6" fill="#c2c0bd" />
<rect x="1381.5" y="881" width="1.6" height="1.6" fill="#c2c0bd" />
<rect x="1385" y="881" width="1.6" height="1.6" fill="#c2c0bd" />
<rect x="1381.5" y="877.5" width="1.6" height="1.6" fill="#c2c0bd" />
<rect x="1385" y="877.5" width="1.6" height="1.6" fill="#c2c0bd" />
<rect x="1385" y="874" width="1.6" height="1.6" fill="#c2c0bd" />
</svg></body></html>
